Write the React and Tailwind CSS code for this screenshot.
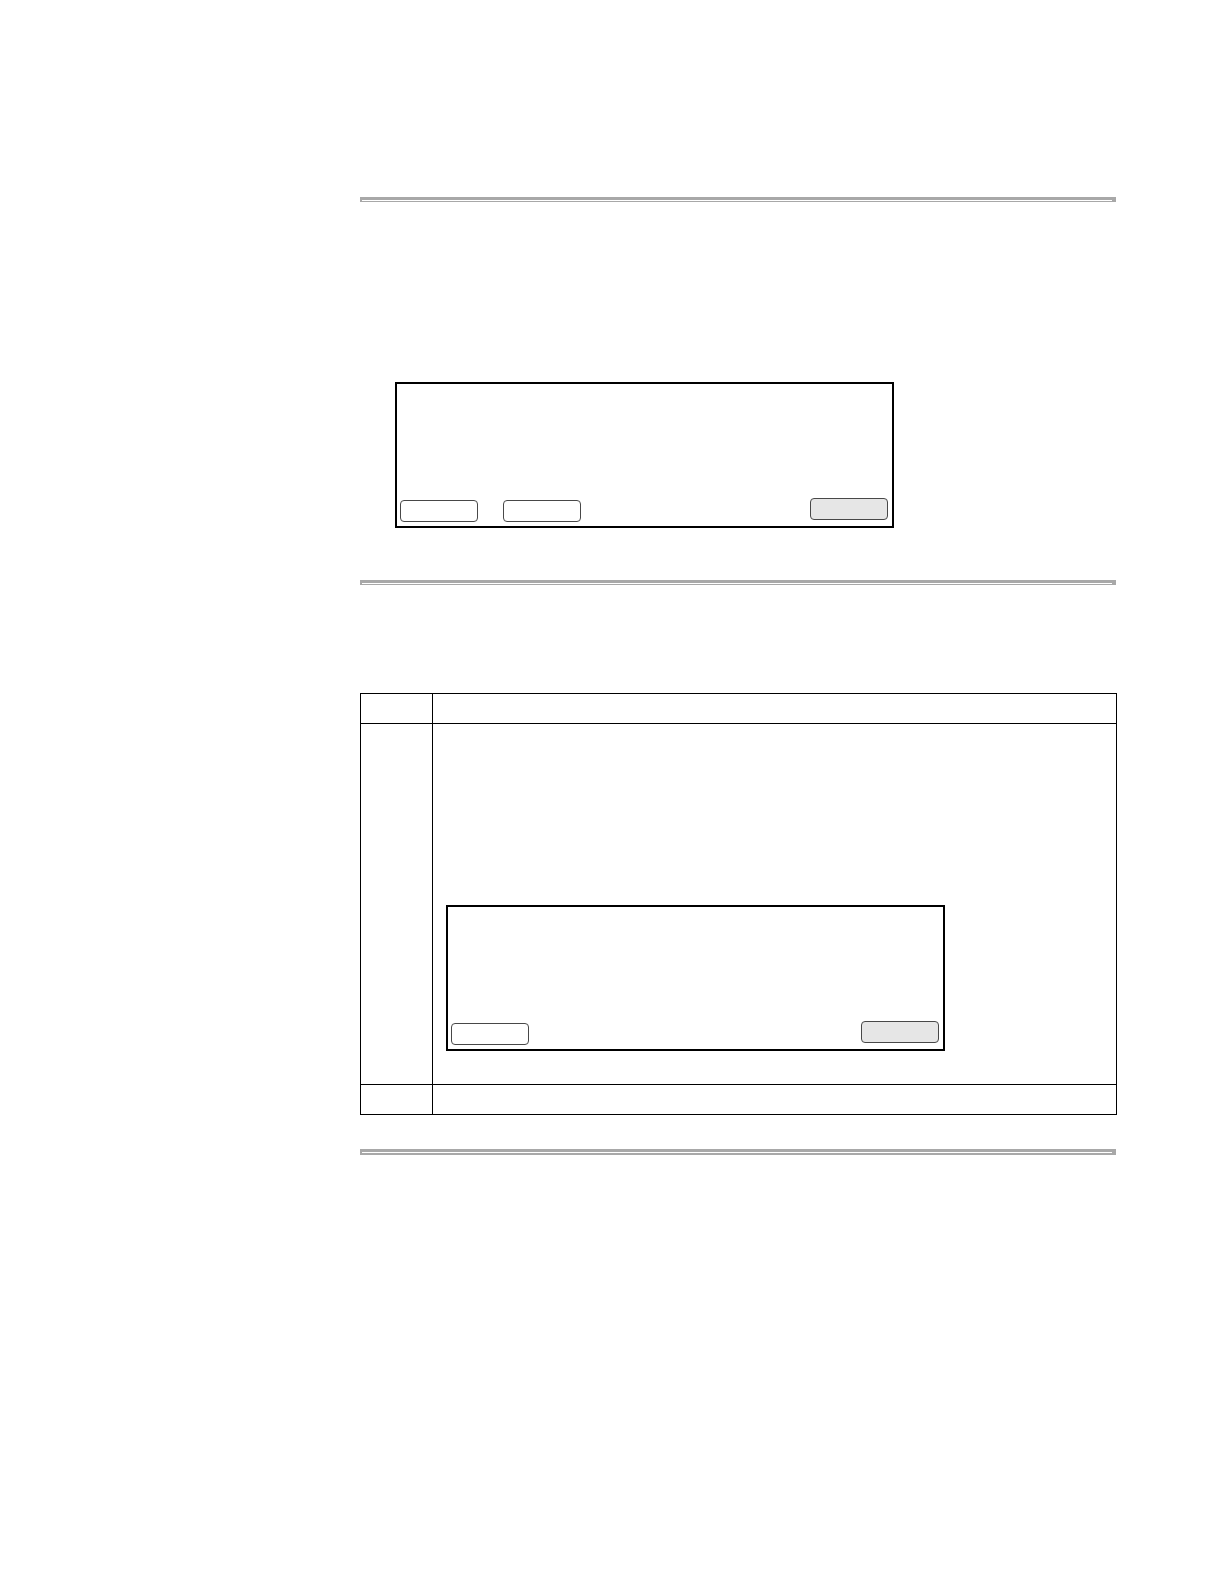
import clsx from 'clsx'

const Rule = ({ thick }) => (
  <hr
    className={clsx(
      'mr-px box-border border-[#a8a8a8] border-t-3 border-l-2 border-r-4 bg-white',
      thick ? 'h-1.5 border-b-2' : 'h-[5px] border-b'
    )}
  />
)

const SoftKey = ({ label, shaded }) => (
  <button
    type="button"
    aria-label={label}
    className={clsx(
      'h-[22px] w-[78px] rounded-[4px] border border-[#484848]',
      shaded ? 'mb-0.5 bg-[#e6e6e6]' : 'bg-white'
    )}
  />
)

// Phone display: soft keys along the bottom edge, the shaded one on the right
function DisplayPanel({ keys, className }) {
  return (
    <div
      className={clsx(
        'flex h-[146px] w-[499px] max-w-full items-end justify-between border-2 border-black bg-white pr-1 pb-1 pl-[3px]',
        className
      )}
    >
      <div className="flex gap-[25px]">
        {keys.map(k => <SoftKey key={k} label={k} />)}
      </div>
      <SoftKey label="Exit" shaded />
    </div>
  )
}

function StepTable() {
  const cell = 'border-r border-b border-black p-0'
  return (
    <table className="w-full table-fixed border-separate border-spacing-0 border-t border-l border-black">
      <colgroup>
        <col className="w-[72px]" />
        <col />
      </colgroup>
      <thead>
        <tr className="h-[30px]">
          <th className={cell} />
          <th className={cell} />
        </tr>
      </thead>
      <tbody>
        <tr>
          <td className={cell} />
          <td className="border-r border-b border-black pt-[181px] pr-3 pb-[33px] pl-[13px]">
            <DisplayPanel keys={['Select']} />
          </td>
        </tr>
        <tr className="h-[30px]">
          <td className={cell} />
          <td className={cell} />
        </tr>
      </tbody>
    </table>
  )
}

export default function App() {
  return (
    <main className="min-h-screen bg-white pt-[197px] pr-[107px] pb-24 pl-[360px]">
      <section>
        <Rule />
        <DisplayPanel keys={['Select', 'Back']} className="mt-[180px] ml-[35px]" />
      </section>

      <section className="mt-[52px]">
        <Rule />
        <div className="mt-[108px]">
          <StepTable />
        </div>
      </section>

      <section className="mt-[34px]">
        <Rule thick />
      </section>
    </main>
  )
}
